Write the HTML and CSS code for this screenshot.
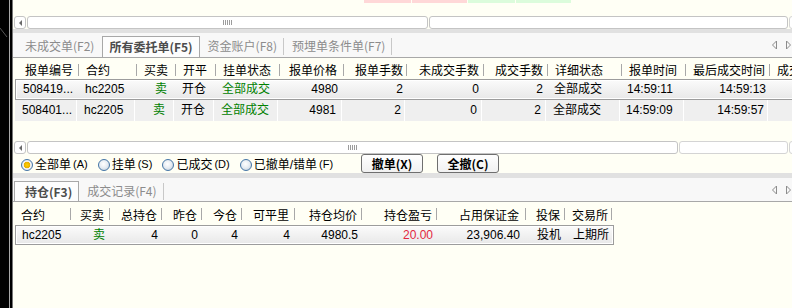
FILE: index.html
```html
<!DOCTYPE html>
<html lang="zh-CN">
<head>
    <meta charset="UTF-8">
    <meta name="viewport" content="width=device-width, initial-scale=1.0">
    <title>委托</title>
    <link rel="stylesheet" href="styles.css">
</head>
<body>
<div class="app">
    <div class="edge">
        <svg width="13" height="40" viewBox="0 0 13 40"><line x1="0" y1="28" x2="7" y2="37" stroke="#555" stroke-width="1"/></svg>
    </div>

    <div class="main">
        <div class="strips">
            <span class="up w1"></span><span class="up w2"></span><span class="down w1"></span><span class="down w2"></span>
        </div>

        <div class="hscroll">
            <span class="sb-arrow"></span>
            <span class="sb-thumb thumb-top"><i class="grip"></i></span>
            <span class="track-top"></span>
            <span class="stub"></span>
        </div>
        <div class="band"></div>

        <!-- orders panel -->
        <div class="tabbar">
            <span class="tab first">未成交单(F2)</span>
            <span class="tab active">所有委托单(F5)</span>
            <span class="tab sep">资金账户(F8)</span>
            <span class="tab sep">预埋单条件单(F7)</span>
            <span class="tabnav">
                <svg width="21" height="10" viewBox="0 0 21 10"><path d="M5.5 1 L1.5 5 L5.5 9 Z" fill="none" stroke="#8c8c8c"/><path d="M15.5 1 L19.5 5 L15.5 9 Z" fill="none" stroke="#8c8c8c"/></svg>
            </span>
        </div>

        <div class="tbl orders head top-head">
            <span class="c first-h">报单编号</span>
            <span class="c">合约</span>
            <span class="c r p8">买卖</span>
            <span class="c">开平</span>
            <span class="c">挂单状态</span>
            <span class="c r p7">报单价格</span>
            <span class="c r p4">报单手数</span>
            <span class="c r">未成交手数</span>
            <span class="c r">成交手数</span>
            <span class="c">详细状态</span>
            <span class="c">报单时间</span>
            <span class="c r">最后成交时间</span>
            <span class="c">成交均价</span>
        </div>
        <div class="tbl orders row sel">
            <span class="c">508419...</span>
            <span class="c">hc2205</span>
            <span class="c r p8 g">卖</span>
            <span class="c">开仓</span>
            <span class="c g">全部成交</span>
            <span class="c r">4980</span>
            <span class="c r p3">2</span>
            <span class="c r p4">0</span>
            <span class="c r p4">2</span>
            <span class="c">全部成交</span>
            <span class="c p6">14:59:11</span>
            <span class="c r p3">14:59:13</span>
            <span class="c"></span>
        </div>
        <div class="tbl orders row alt">
            <span class="c">508401...</span>
            <span class="c">hc2205</span>
            <span class="c r p8 g">卖</span>
            <span class="c">开仓</span>
            <span class="c g">全部成交</span>
            <span class="c r">4981</span>
            <span class="c r p3">2</span>
            <span class="c r p4">0</span>
            <span class="c r p4">2</span>
            <span class="c">全部成交</span>
            <span class="c p6">14:59:09</span>
            <span class="c r p3">14:59:57</span>
            <span class="c"></span>
        </div>
        <div class="gap"></div>

        <div class="hscroll">
            <span class="sb-arrow"></span>
            <span class="sb-thumb thumb-low"><i class="grip"></i></span>
            <span class="track-low"></span>
            <span class="stub"></span>
        </div>

        <div class="filters">
            <div class="opts">
                <label class="opt"><i class="radio on"></i>全部单<span class="key">(A)</span></label>
                <label class="opt"><i class="radio"></i>挂单<span class="key">(S)</span></label>
                <label class="opt"><i class="radio"></i>已成交<span class="key">(D)</span></label>
                <label class="opt"><i class="radio"></i>已撤单/错单<span class="key">(F)</span></label>
            </div>
            <button class="btn">撤单(X)</button>
            <button class="btn">全撤(C)</button>
        </div>
        <div class="band thick"></div>

        <!-- positions panel -->
        <div class="tabbar low">
            <span class="tab active first">持仓(F3)</span>
            <span class="tab sep">成交记录(F4)</span>
            <span class="tabnav">
                <svg width="21" height="10" viewBox="0 0 21 10"><path d="M5.5 1 L1.5 5 L5.5 9 Z" fill="none" stroke="#8c8c8c"/><path d="M15.5 1 L19.5 5 L15.5 9 Z" fill="none" stroke="#8c8c8c"/></svg>
            </span>
        </div>

        <div class="tbl holds head low-head">
            <span class="c p6l">合约</span>
            <span class="c r p6">买卖</span>
            <span class="c r">总持仓</span>
            <span class="c r">昨仓</span>
            <span class="c r">今仓</span>
            <span class="c r p6">可平里</span>
            <span class="c r">持仓均价</span>
            <span class="c r">持仓盈亏</span>
            <span class="c r p7">占用保证金</span>
            <span class="c p10l">投保</span>
            <span class="c">交易所</span>
        </div>
        <div class="tbl holds row sel short">
            <span class="c p6l">hc2205</span>
            <span class="c r p6 g">卖</span>
            <span class="c r">4</span>
            <span class="c r">0</span>
            <span class="c r">4</span>
            <span class="c r p6">4</span>
            <span class="c r">4980.5</span>
            <span class="c r red">20.00</span>
            <span class="c r p7">23,906.40</span>
            <span class="c p10l">投机</span>
            <span class="c">上期所</span>
        </div>
    </div>
</div>
</body>
</html>
```

FILE: styles.css
```css
* {
    box-sizing: border-box;
}
body {
    margin: 0;
    background-color: #fffff5;
    color: #000000;
    font-family: "Liberation Sans", "Noto Sans CJK SC", sans-serif;
    font-size: 12px;
    overflow: hidden;
}
.app {
    display: flex;
    height: 308px;
}
.edge {
    flex: none;
    width: 13px;
    background: linear-gradient(90deg, #000 0 9px, #a8a8a8 9px 10px, #000 10px 12px, #777 12px 13px);
}
.edge svg {
    display: block;
}
.main {
    flex: 1;
    min-width: 0;
    overflow: hidden;
}

/* bits of the grid above */
.strips {
    display: flex;
    gap: 1px;
    height: 3px;
    margin: 0 0 13px 351px;
}
.strips span {
    flex: none;
    height: 3px;
}
.up { background-color: #ffd8d8; }
.down { background-color: #dcfcdc; }
.w1 { width: 47px; }
.w2 { width: 55px; }

/* scrollbars */
.hscroll {
    display: flex;
    gap: 1px;
    height: 13px;
    padding-left: 1px;
}
.hscroll > span {
    flex: none;
    height: 13px;
    border: 1px solid #c4c4c4;
    border-radius: 3px;
    background-color: #ffffff;
}
.sb-arrow {
    width: 12px;
    display: flex;
    align-items: center;
    justify-content: center;
}
.sb-arrow::before {
    content: "";
    border-right: 3px solid #6a6a6a;
    border-top: 3px solid transparent;
    border-bottom: 3px solid transparent;
}
.sb-thumb {
    display: flex;
    align-items: center;
    justify-content: center;
}
.grip {
    width: 9px;
    height: 5px;
    background: repeating-linear-gradient(90deg, #9c9c9c 0 1px, transparent 1px 2px);
}
.thumb-top { width: 401px; }
.track-top { width: 359px; }
.thumb-low { width: 651px; }
.track-low { width: 109px; border-color: #d4d4d4 !important; }
.stub { width: 20px; border-color: #d4d4d4 !important; }

.band {
    height: 4px;
    background-color: #e1e1e1;
}
.band.thick {
    height: 5px;
}

/* tabs */
.tabbar {
    display: flex;
    align-items: flex-end;
    height: 25px;
    padding-left: 1px;
    border-bottom: 1px solid #a8a8a8;
    background-color: #f8f8f8;
    font-family: "Noto Sans CJK SC", sans-serif;
}
.tabbar.low {
    height: 24px;
}
.tab {
    flex: none;
    height: 21px;
    line-height: 20px;
    padding: 0 7px 0 8px;
    color: #8c8c8c;
    white-space: nowrap;
}
.tabbar.low .tab {
    height: 20px;
    line-height: 19px;
}
.tab.first {
    padding-left: 11px;
    padding-right: 8px;
}
.tab.sep {
    background: linear-gradient(#c8c8c8, #c8c8c8) right 0 top 2px / 1px 17px no-repeat;
}
.tab.active {
    border: 1px solid #a8a8a8;
    border-bottom: 0;
    background-color: #fdfdfd;
    color: #4c4c4c;
    font-weight: bold;
    padding: 0 6px;
}
.tab.active.first {
    padding-left: 10px;
}
.tabnav {
    display: flex;
    margin-left: auto;
    align-self: center;
}

/* tables */
.tbl {
    display: grid;
    width: max-content;
    margin-left: 2px;
}
.orders {
    grid-template-columns: 62px 58px 39px 40px 64px 64px 63px 77px 64px 74px 64px 84px 80px;
}
.holds {
    grid-template-columns: 56px 39px 52px 40px 40px 53px 67px 75px 89px 39px 47px;
}
.c {
    padding: 0 5px 0 7px;
    white-space: nowrap;
    overflow: hidden;
}
.r { text-align: right; }
.p3 { padding-right: 3px; }
.p4 { padding-right: 4px; }
.p6 { padding-right: 6px; }
.p7 { padding-right: 7px; }
.p8 { padding-right: 8px; }
.p6l { padding-left: 6px; }
.p10l { padding-left: 10px; }
.c.p6:not(.r) { padding-left: 6px; }

.head .c {
    height: 21px;
    padding-top: 5px;
    line-height: 16px;
    background: linear-gradient(#a8a8a8, #a8a8a8) right 0 top 6px / 1px 12px no-repeat;
}
.top-head {
    margin-left: 4px;
}
.top-head .first-h {
    padding-left: 8px;
}
.low-head .c {
    height: 23px;
    padding-top: 6px;
}

.row {
    height: 21px;
    line-height: 21px;
}
.row.sel {
    border: 1px solid #9c9c9c;
    background: linear-gradient(#fbfbfb, #e8e8e8);
    box-shadow: inset 0 0 0 1px #ffffff;
    line-height: 19px;
}
.row.short {
    height: 20px;
    line-height: 18px;
}
.row.alt {
    background-color: #efefef;
}
.row.alt .c {
    border-right: 1px solid #ffffff;
}
.g { color: #008000; }
.red { color: #e3263e; }
.gap {
    height: 20px;
}

/* filter row */
.filters {
    display: flex;
    align-items: center;
    height: 19px;
    padding-left: 8px;
}
.opts {
    display: flex;
    align-items: center;
    width: 340px;
}
.opt {
    display: flex;
    align-items: center;
    margin-right: 10px;
    white-space: nowrap;
}
.radio {
    flex: none;
    width: 12px;
    height: 12px;
    margin: 3px 2px 0 0;
    border: 1px solid #4475a6;
    border-radius: 50%;
    background: radial-gradient(circle at 45% 40%, #ffffff 0, #e6ecf2 4px, #cfd9e4 6px);
}
.radio.on {
    background: radial-gradient(circle, #ffd400 0, #e8ae00 3px, #f4f4f4 3.6px, #dde5ee 6px);
}
.key {
    font-size: 11px;
    margin-left: 2px;
}
.btn {
    flex: none;
    width: 62px;
    height: 19px;
    padding: 0;
    border: 1px solid #6f6f6f;
    border-radius: 3px;
    background: linear-gradient(#ffffff, #f1f1f1);
    color: #000000;
    font-family: "Noto Sans CJK SC", sans-serif;
    font-size: 12px;
    font-weight: bold;
    line-height: 17px;
}
.btn + .btn {
    margin-left: 14px;
}
```
